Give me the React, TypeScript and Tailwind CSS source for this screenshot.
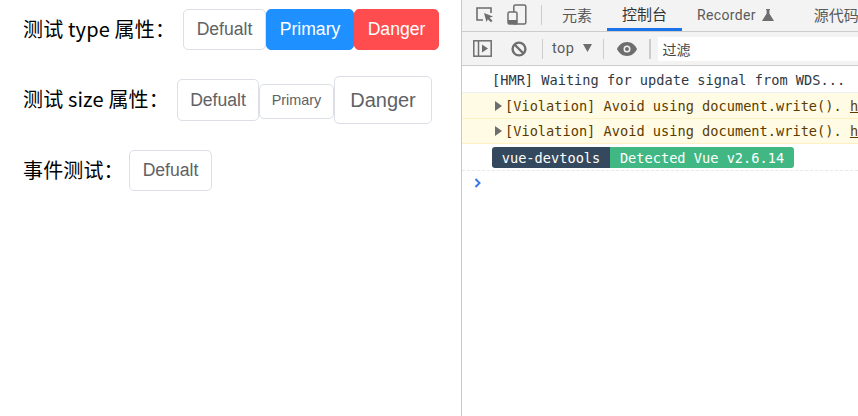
import { ReactNode } from 'react';

const base = 'shrink-0 rounded-[5px] border font-["Liberation_Sans",Arial,sans-serif]';
const plain = `${base} border-[#dcdfe6] bg-white text-[#606266]`;

function Row({ label, width, children }: { label: string; width: string; children: ReactNode }) {
  return (
    <div className="flex items-center">
      <span className={`${width} shrink-0 whitespace-pre pb-[2px] pl-[23px] text-[20px] leading-[28px] tracking-[0.15px] text-black`}>{label}</span>
      {children}
    </div>
  );
}

function Message({ text }: { text: string }) {
  return (
    <div className="flex h-[25.5px] shrink-0 items-center border-b border-[#fff1c4] bg-[#fffbe5] pl-[33px] pt-[1px] text-[#5c3b00]">
      <svg width="8" height="10" viewBox="0 0 8 10" className="mr-[2px] shrink-0">
        <path d="M0 0l7 5-7 5z" fill="#6e6e6e" />
      </svg>
      <span className="whitespace-pre">{text} </span>
      <span className="whitespace-pre underline">h</span>
    </div>
  );
}

export default function App() {
  return (
    <div className="flex h-[416px] w-[858px] overflow-hidden bg-white">
      {/* demo page */}
      <div className="flex w-[461px] shrink-0 flex-col gap-[26px] pt-[9px] font-['Noto_Sans_CJK_SC','Noto_Sans',sans-serif]">
        <Row label="测试 type 属性：" width="w-[183px]">
          <button className={`${plain} h-[41px] w-[83px] text-[17.6px]`}>Defualt</button>
          <button className={`${base} h-[41px] w-[88px] border-[#1e90ff] bg-[#1e90ff] text-[17.6px] text-white`}>Primary</button>
          <button className={`${base} h-[41px] w-[85px] border-[#ff4d4f] bg-[#ff4d4f] text-[17.6px] text-white`}>Danger</button>
        </Row>
        <Row label="测试 size 属性：" width="w-[177px]">
          <button className={`${plain} h-[42px] w-[82px] text-[17.6px]`}>Defualt</button>
          <button className={`${plain} mt-[2px] h-[35px] w-[75px] text-[14.4px]`}>Primary</button>
          <button className={`${plain} h-[48px] w-[98px] text-[20px]`}>Danger</button>
        </Row>
        <Row label="事件测试：" width="w-[129px]">
          <button className={`${plain} h-[41px] w-[83px] text-[17.6px]`}>Defualt</button>
        </Row>
      </div>

      {/* devtools */}
      <div className="flex min-w-0 flex-1 flex-col border-l border-[#c8c8c8] font-['DejaVu_Sans_Mono','Liberation_Mono',monospace] text-[13.65px] leading-[18px]">
        <div className="flex h-[32px] shrink-0 items-center border-b border-[#cccccc] bg-[#f3f3f3] pl-[13px] font-['Noto_Sans_CJK_SC','Noto_Sans',sans-serif] text-[15px] text-[#5a5a5a]">
          <svg width="20" height="20" viewBox="0 0 20 20" fill="none" className="mb-[2px] shrink-0">
            <path d="M8 15H2V3h14v5" stroke="#6e6e6e" strokeWidth="1.6" />
            <path d="M9 8l9 3.500-3.500 1.200 3 3-1.600 1.600-3-3L11.500 17z" fill="#6e6e6e" />
          </svg>
          <svg width="20" height="22" viewBox="0 0 20 22" fill="none" className="mb-[2px] ml-[12px] shrink-0">
            <rect x="6.800" y="1" width="12" height="19" rx="1.500" stroke="#6e6e6e" strokeWidth="1.500" />
            <rect x="1" y="8" width="9" height="12" rx="1.500" fill="#f3f3f3" stroke="#6e6e6e" strokeWidth="1.500" />
            <rect x="1" y="16" width="9" height="4" fill="#6e6e6e" />
          </svg>
          <div className="mb-[2px] ml-[14px] h-[20px] w-px shrink-0 bg-[#cccccc]" />
          <span className="mb-[2px] ml-[20px] shrink-0">元素</span>
          <div className="ml-[15px] flex h-full w-[75px] shrink-0 items-center justify-center border-b-[3px] border-[#1a73e8] text-[#333333]">控制台</div>
          <span className="mb-[2px] ml-[15px] flex shrink-0 items-center gap-[6px] font-['Roboto',sans-serif] text-[14px] tracking-[0.35px]">
            Recorder
            <svg width="12" height="12" viewBox="0 0 12 12">
              <path d="M4 0h4v1H7.400v3.500L12 12H0l4.600-7.500V1H4z" fill="#6e6e6e" />
            </svg>
          </span>
          <span className="mb-[2px] ml-[40px] shrink-0">源代码</span>
        </div>

        <div className="flex h-[34px] shrink-0 items-center border-b border-[#cccccc] bg-[#f3f3f3] pl-[11px] text-[#5a5a5a]">
          <svg width="19" height="17" viewBox="0 0 19 17" fill="none" className="shrink-0">
            <rect x="0.800" y="0.800" width="17.400" height="15.400" stroke="#6e6e6e" strokeWidth="1.500" />
            <path d="M5.500 1v15" stroke="#6e6e6e" strokeWidth="1.500" />
            <path d="M9 4.500l6 4-6 4z" fill="#6e6e6e" />
          </svg>
          <svg width="16" height="16" viewBox="0 0 16 16" fill="none" className="ml-[19px] shrink-0">
            <circle cx="8" cy="8" r="6.400" stroke="#6e6e6e" strokeWidth="2.400" />
            <path d="M3.500 3.500l9 9" stroke="#6e6e6e" strokeWidth="2.400" />
          </svg>
          <div className="ml-[15px] h-[20px] w-px shrink-0 bg-[#cccccc]" />
          <span className="ml-[9px] shrink-0 font-['Roboto',sans-serif] text-[14.5px] tracking-[0.5px]">top</span>
          <svg width="9" height="8" viewBox="0 0 9 8" className="mb-[2px] ml-[8px] shrink-0">
            <path d="M0 0h9L4.500 8z" fill="#6e6e6e" />
          </svg>
          <div className="ml-[11px] h-[20px] w-px shrink-0 bg-[#cccccc]" />
          <svg width="20" height="14" viewBox="0 0 20 14" className="ml-[13px] shrink-0">
            <path fillRule="evenodd" d="M10 0c4.500 0 8.200 2.800 10 7-1.800 4.200-5.500 7-10 7S1.800 11.200 0 7c1.800-4.200 5.500-7 10-7zm0 3.500a3.500 3.500 0 100 7 3.500 3.500 0 000-7z" fill="#6e6e6e" />
            <circle cx="10" cy="7" r="2" fill="#6e6e6e" />
          </svg>
          <div className="ml-[12px] h-[20px] w-[2px] shrink-0 bg-[#cccccc]" />
          <div className="ml-[7px] flex h-[24px] flex-1 items-center bg-white pl-[5px] font-['Noto_Sans_CJK_SC','Noto_Sans',sans-serif] text-[14px] text-[#444444]">过滤</div>
        </div>

        <div className="flex h-[27px] shrink-0 items-center border-b border-[#f0f0f0] pl-[30px] pt-[2px] text-[#303942]">
          <span className="whitespace-pre">[HMR] Waiting for update signal from WDS...</span>
        </div>
        <Message text="[Violation] Avoid using document.write()." />
        <Message text="[Violation] Avoid using document.write()." />

        <div className="flex h-[27px] shrink-0 items-center border-b border-dashed border-[#e8e8e8] pl-[30px] pt-[1px]">
          <span className="flex h-[21px] w-[118px] items-center justify-center rounded-l-[3px] bg-[#35495e] text-white">vue-devtools</span>
          <span className="flex h-[21px] w-[184px] items-center justify-center rounded-r-[3px] bg-[#41b883] text-white">Detected Vue v2.6.14</span>
        </div>

        <div className="flex h-[24px] shrink-0 items-center pl-[12px]">
          <svg width="8" height="10" viewBox="0 0 8 10" fill="none">
            <path d="M1.500 1l4 4-4 4" stroke="#3b78e7" strokeWidth="2" />
          </svg>
        </div>
      </div>
    </div>
  );
}
